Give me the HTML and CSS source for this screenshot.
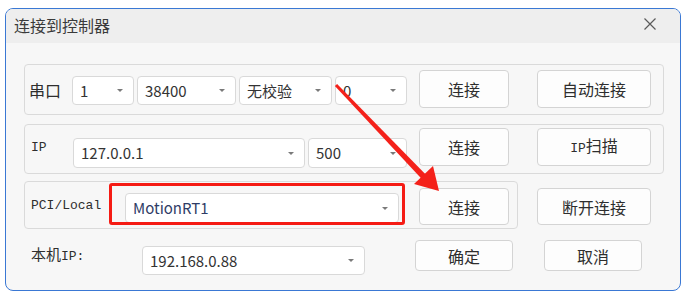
FILE: index.html
```html
<!DOCTYPE html>
<html lang="zh-CN">
<head>
<meta charset="utf-8">
<title>连接到控制器</title>
<link rel="stylesheet" href="styles.css">
</head>
<body>
<div class="win">
  <div class="titlebar">
    <span class="title">连接到控制器</span>
    <svg class="close" width="14" height="14" viewBox="0 0 14 14"><path d="M1.5 1.5 L12.5 12.5 M12.5 1.5 L1.5 12.5" stroke="#5a5a5a" stroke-width="1.2" fill="none"/></svg>
  </div>
  <div class="content">
    <div class="group g1">
      <span class="label cjk l1">串口</span>
      <div class="combo c1"><span>1</span><i class="caret"></i></div>
      <div class="combo c2"><span>38400</span><i class="caret"></i></div>
      <div class="combo c3"><span>无校验</span><i class="caret"></i></div>
      <div class="combo c4"><span>0</span><i class="caret"></i></div>
      <button class="btn b-conn">连接</button>
      <button class="btn b-wide">自动连接</button>
    </div>
    <div class="group g2">
      <span class="label mono l2">IP</span>
      <div class="combo c5"><span>127.0.0.1</span><i class="caret"></i></div>
      <div class="combo c6"><span>500</span><i class="caret"></i></div>
      <button class="btn b-conn">连接</button>
      <button class="btn b-wide"><span class="mono-in">IP</span>扫描</button>
    </div>
    <div class="row3">
      <div class="group g3">
        <span class="label mono l3">PCI/Local</span>
        <div class="combo c7"><span class="blue">MotionRT1</span><i class="caret"></i></div>
        <button class="btn b-conn">连接</button>
        <div class="highlight"></div>
      </div>
      <button class="btn b-wide b-out">断开连接</button>
    </div>
    <div class="row4">
      <span class="label l4">本机<span class="mono-in">IP:</span></span>
      <div class="combo c8"><span>192.168.0.88</span><i class="caret"></i></div>
      <button class="btn b-ok">确定</button>
      <button class="btn b-cancel">取消</button>
    </div>
  </div>
</div>
<svg class="arrow" width="690" height="301" viewBox="0 0 690 301">
  <polygon points="334.9,86 337.1,84 426.2,174.9 421.8,179.1" fill="#f4211a"/>
  <polygon points="439,191 433,166 414,184" fill="#f4211a"/>
</svg>
</body>
</html>
```

FILE: styles.css
```css
* { box-sizing: border-box; }
html, body { margin: 0; padding: 0; background: #ffffff; }
body {
  width: 690px;
  height: 301px;
  position: relative;
  font-family: "Noto Sans CJK SC", "Noto Sans", sans-serif;
  color: #2e2e2e;
  overflow: hidden;
}
.win {
  margin: 8px 0 0 5px;
  width: 676px;
  height: 283px;
  border: 1px solid #3a78d4;
  border-radius: 8px;
  background: #f7f7f7;
  overflow: hidden;
}
.titlebar {
  height: 34px;
  background: #eeeeee;
  display: flex;
  align-items: center;
  justify-content: space-between;
  padding: 0 23px 0 8px;
}
.title {
  font-size: 16px;
  line-height: 20px;
  color: #3a3a3a;
  margin-top: -2px;
}
.close { display: block; margin-top: -4px; }
.content {
  padding: 21px 0 0 18px;
}
.group {
  display: flex;
  align-items: flex-start;
  border: 1px solid #dadada;
  border-radius: 4px;
  background: #f7f7f7;
}
.g1 { width: 640px; height: 51px; }
.g2 { width: 640px; height: 50px; margin-top: 9px; }
.g3 { width: 494px; height: 48px; position: relative; }
.row3 { display: flex; align-items: flex-start; margin-top: 7px; }
.row4 { display: flex; align-items: flex-start; height: 50px; }

.label {
  font-size: 16px;
  line-height: 20px;
  color: #2e2e2e;
  flex: none;
}
.mono, .mono-in {
  font-family: "Liberation Mono", "DejaVu Sans Mono", monospace;
  font-size: 13px;
}
.l1 { width: 47px; padding-left: 4px; margin-top: 15px; }
.l2 { width: 48px; padding-left: 6px; margin-top: 13px; }
.l3 { width: 100px; padding-left: 6px; margin-top: 14px; }
.l4 { width: 118px; padding-left: 7px; margin-top: 15px; font-size: 15px; }

.combo {
  flex: none;
  display: flex;
  align-items: center;
  justify-content: space-between;
  height: 29px;
  padding: 0 10px 0 7px;
  background: #ffffff;
  border: 1px solid #d9d9d9;
  border-radius: 4px;
  font-size: 15px;
  color: #333333;
  margin-left: 3px;
}
.combo span { line-height: 20px; }
.blue { color: #2f3c66; }
.caret {
  width: 0;
  height: 0;
  border-left: 3.5px solid transparent;
  border-right: 3.5px solid transparent;
  border-top: 3px solid #7a7a7a;
}
.g1 .combo { margin-top: 11px; }
.c1 { width: 62px; margin-left: 0; }
.c2 { width: 99px; }
.c3 { width: 93px; }
.c4 { width: 72px; }
.g2 .combo { margin-top: 13px; height: 30px; }
.c5 { width: 232px; margin-left: 0; }
.c6 { width: 99px; }
.g3 .combo { margin-top: 11px; height: 30px; }
.c7 { width: 274px; margin-left: 0; }
.c8 { width: 223px; margin-left: 0; margin-top: 17px; }

.btn {
  flex: none;
  font-family: "Noto Sans CJK SC", "Noto Sans", sans-serif;
  font-size: 16px;
  color: #2e2e2e;
  background: #fdfdfd;
  border: 1px solid #d4d4d4;
  border-radius: 4px;
  padding: 0;
  height: 38px;
  line-height: 20px;
}
.b-conn { width: 90px; margin-left: 12px; }
.b-wide { width: 114px; margin-left: 28px; }
.g1 .btn { margin-top: 5px; }
.g2 .btn { margin-top: 3px; }
.g3 .b-conn { margin-top: 6px; height: 37px; margin-left: 20px; }
.b-out { margin-left: 19px; margin-top: 7px; height: 37px; }
.b-ok { width: 98px; height: 31px; margin-left: 50px; margin-top: 11px; }
.b-cancel { width: 98px; height: 31px; margin-left: 31px; margin-top: 11px; }

.highlight {
  position: absolute;
  left: 84px;
  top: 1px;
  width: 296px;
  height: 42px;
  border: 3px solid #f51b14;
  border-radius: 3px;
}
.arrow {
  position: absolute;
  left: 0;
  top: 0;
  pointer-events: none;
}
```
